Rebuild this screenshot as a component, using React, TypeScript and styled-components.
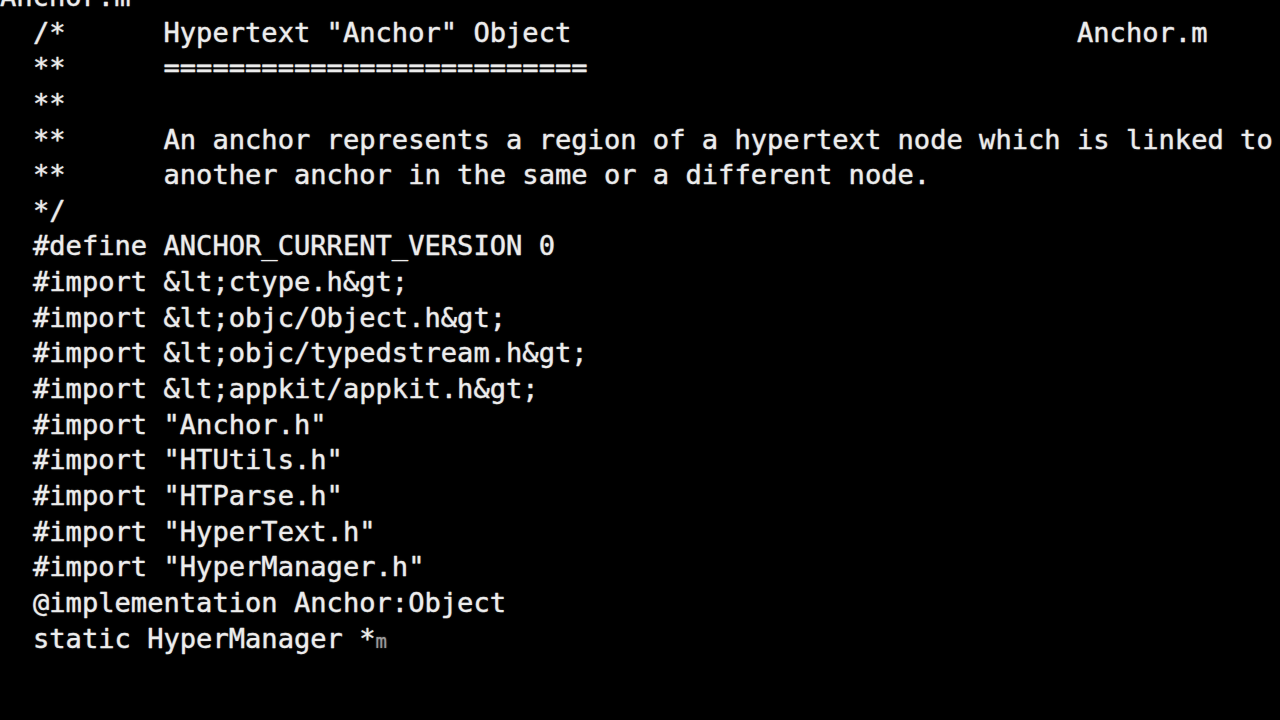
import React from "react";
import styled, { createGlobalStyle } from "styled-components";

const Global = createGlobalStyle`
  html, body { margin: 0; padding: 0; background: #000; }
  body { overflow: hidden; }
`;

const Screen = styled.div`
  width: 1280px;
  height: 720px;
  background: #000;
  overflow: hidden;
`;

const Code = styled.div`
  display: flex;
  flex-direction: column;
  margin-top: -21px;
  padding-left: 33px;
  font-family: "DejaVu Sans Mono", "Liberation Mono", monospace;
  font-size: 27.1px;
  line-height: 35.65px;
  color: #ededed;
  -webkit-text-stroke: 0.35px rgba(237, 237, 237, 0.8);
  text-shadow: 0 0 1.5px rgba(255, 255, 255, 0.45);
`;

const Line = styled.div<{ $shift?: number }>`
  white-space: pre;
  height: 35.65px;
  margin-left: ${(p) => p.$shift ?? 0}px;
`;

const Faded = styled.span`
  font-size: 19px;
  color: #9a9a9a;
  -webkit-text-stroke: 0;
`;

const lines: string[] = [
  '/*      Hypertext "Anchor" Object                               Anchor.m',
  "**      ==========================",
  "**",
  "**      An anchor represents a region of a hypertext node which is linked to",
  "**      another anchor in the same or a different node.",
  "*/",
  "#define ANCHOR_CURRENT_VERSION 0",
  "#import &lt;ctype.h&gt;",
  "#import &lt;objc/Object.h&gt;",
  "#import &lt;objc/typedstream.h&gt;",
  "#import &lt;appkit/appkit.h&gt;",
  '#import "Anchor.h"',
  '#import "HTUtils.h"',
  '#import "HTParse.h"',
  '#import "HyperText.h"',
  '#import "HyperManager.h"',
  "@implementation Anchor:Object",
];

export default function App() {
  return (
    <Screen>
      <Global />
      <Code>
        <Line $shift={-33}>Anchor.m</Line>
        {lines.map((l, i) => (
          <Line key={i}>{l}</Line>
        ))}
        <Line>
          static HyperManager *<Faded>m</Faded>
        </Line>
      </Code>
    </Screen>
  );
}
